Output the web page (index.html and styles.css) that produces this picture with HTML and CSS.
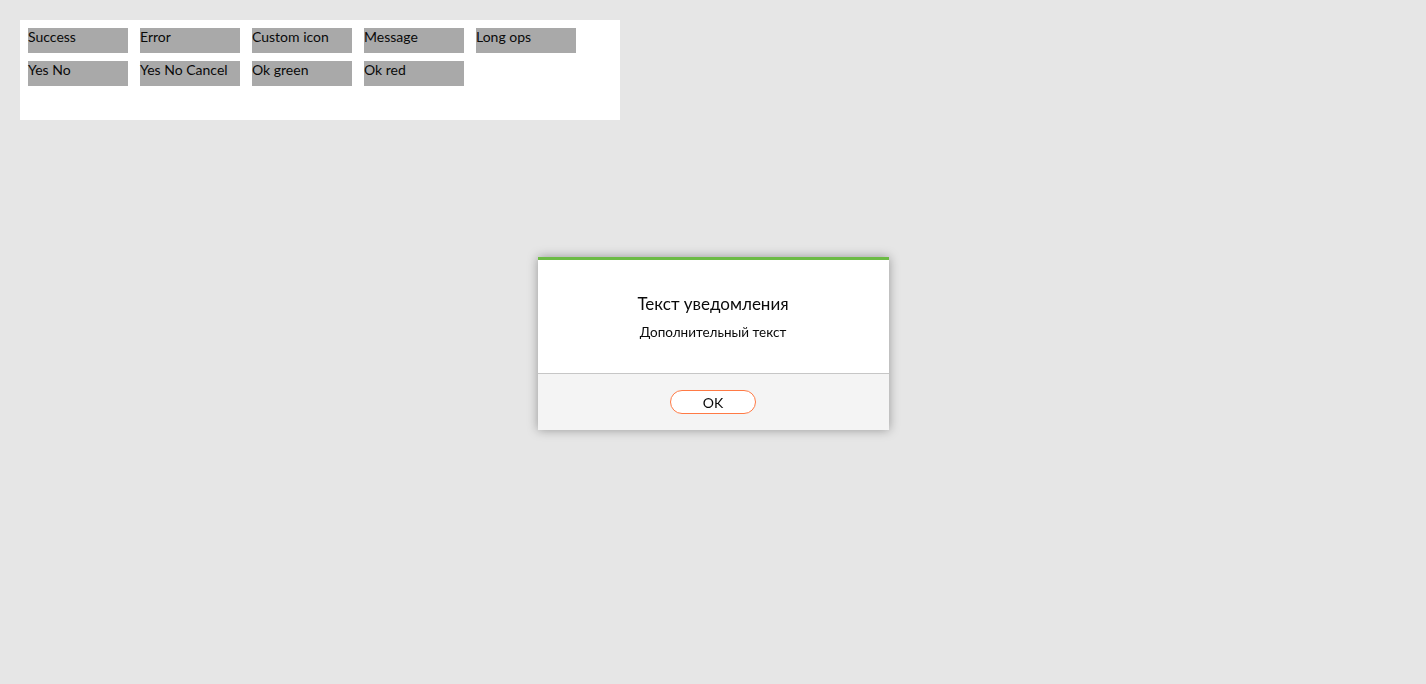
FILE: index.html
```html
<!DOCTYPE html>
<html lang="ru">
<head>
<meta charset="utf-8">
<title>Notifications demo</title>
<link rel="stylesheet" href="styles.css">
</head>
<body>
<div class="panel">
  <button class="btn">Success</button>
  <button class="btn">Error</button>
  <button class="btn">Custom icon</button>
  <button class="btn">Message</button>
  <button class="btn">Long ops</button>
  <button class="btn">Yes No</button>
  <button class="btn">Yes No Cancel</button>
  <button class="btn">Ok green</button>
  <button class="btn">Ok red</button>
</div>
<div class="overlay">
  <div class="dialog">
    <div class="dialog-body">
      <div class="dialog-title">Текст уведомления</div>
      <div class="dialog-text">Дополнительный текст</div>
    </div>
    <div class="dialog-footer">
      <button class="ok-btn">OK</button>
    </div>
  </div>
</div>
</body>
</html>
```
FILE: styles.css
```css
html, body {
  margin: 0;
  padding: 0;
}
body {
  background: #e6e6e6;
  font-family: Lato, "Noto Sans", sans-serif;
  color: #000;
  padding: 20px;
  height: 684px;
  box-sizing: border-box;
}
.panel {
  width: 600px;
  height: 100px;
  box-sizing: border-box;
  background: #fff;
  padding: 8px;
  display: flex;
  flex-wrap: wrap;
  align-content: flex-start;
  column-gap: 12px;
  row-gap: 8px;
}
.btn {
  width: 100px;
  height: 25px;
  margin: 0;
  padding: 1px 0 0 0;
  border: none;
  background: #a9a9a9;
  font-family: inherit;
  font-size: 14px;
  color: #0a0a0a;
  text-align: left;
  line-height: 16px;
  display: flex;
  align-items: flex-start;
}
.overlay {
  position: fixed;
  inset: 0;
  display: flex;
  align-items: center;
  justify-content: center;
  padding-top: 3px;
}
.dialog {
  width: 351px;
  background: #fff;
  border-top: 3px solid #6cbb45;
  box-shadow: 0 0 10px rgba(0, 0, 0, 0.35);
}
.dialog-body {
  height: 114px;
  box-sizing: border-box;
  border-bottom: 1px solid #c6c6c6;
  display: flex;
  flex-direction: column;
  align-items: center;
  padding-top: 33px;
}
.dialog-title {
  font-size: 17px;
  line-height: 22px;
  color: #0a0a0a;
}
.dialog-text {
  font-size: 13.5px;
  line-height: 16px;
  margin-top: 9px;
  color: #0a0a0a;
}
.dialog-footer {
  height: 56px;
  background: #f4f4f4;
  display: flex;
  justify-content: center;
  align-items: center;
}
.ok-btn {
  width: 86px;
  height: 24px;
  margin: 0;
  padding: 0;
  border: 1px solid #ff7a45;
  border-radius: 12px;
  background: #fff;
  font-family: inherit;
  font-size: 14px;
  color: #0a0a0a;
}
```
